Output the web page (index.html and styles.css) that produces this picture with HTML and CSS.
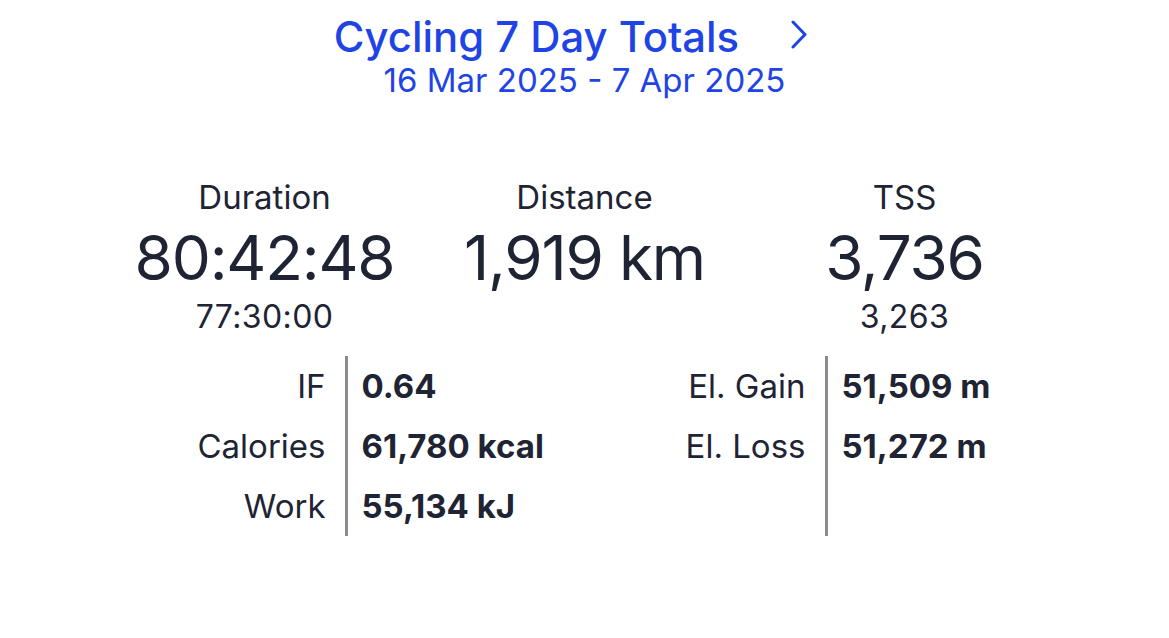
FILE: index.html
```html
<!DOCTYPE html>
<html lang="en">
<head>
    <meta charset="UTF-8">
    <title>Cycling 7 Day Totals</title>
    <link rel="stylesheet" href="styles.css">
</head>
<body>

<div class="page">
    <header class="summary-head">
        <a class="title-link" href="#">
            <span class="title">Cycling 7 Day Totals</span>
            <span class="chevron">
                <svg width="16" height="29" viewBox="0 0 16 29">
                    <path d="M2 2 L14 14.5 L2 27" fill="none" stroke="currentColor" stroke-width="3" stroke-linecap="round" stroke-linejoin="round"/>
                </svg>
            </span>
        </a>
        <div class="range">16 Mar 2025 - 7 Apr 2025</div>
    </header>

    <section class="totals">
        <div class="total">
            <div class="total-label">Duration</div>
            <div class="total-value">80:42:48</div>
            <div class="total-planned">77:30:00</div>
        </div>
        <div class="total">
            <div class="total-label">Distance</div>
            <div class="total-value">1,919 km</div>
            <div class="total-planned"></div>
        </div>
        <div class="total">
            <div class="total-label">TSS</div>
            <div class="total-value">3,736</div>
            <div class="total-planned">3,263</div>
        </div>
    </section>

    <section class="details">
        <div class="detail-table">
            <div class="detail-label">IF</div>
            <div class="detail-value">0.64</div>
            <div class="detail-label">Calories</div>
            <div class="detail-value">61,780 kcal</div>
            <div class="detail-label">Work</div>
            <div class="detail-value">55,134 kJ</div>
        </div>
        <div class="detail-table">
            <div class="detail-label">El. Gain</div>
            <div class="detail-value">51,509 m</div>
            <div class="detail-label">El. Loss</div>
            <div class="detail-value">51,272 m</div>
            <div class="detail-label"></div>
            <div class="detail-value"></div>
        </div>
    </section>
</div>

</body>
</html>
```

FILE: styles.css
```css
body {
    margin: 0;
    background: #fff;
    color: #1e2433;
    font-family: Inter, "Noto Sans", sans-serif;
}
.page {
    width: 960px;
    margin: 0 auto;
    padding-top: 14px;
}
.summary-head {
    display: flex;
    flex-direction: column;
    align-items: center;
    color: #1f44e6;
}
.title-link {
    display: flex;
    align-items: center;
    color: inherit;
    text-decoration: none;
}
.title {
    font-size: 41.8px;
    font-weight: 500;
    line-height: 46px;
}
.chevron {
    display: flex;
    width: 44px;
    margin-left: 52px;
    margin-top: -5px;
}
.range {
    font-size: 33px;
    line-height: 40px;
}
.totals {
    display: grid;
    grid-template-columns: repeat(3, 1fr);
    margin-top: 77px;
    text-align: center;
}
.total-label {
    font-size: 33px;
    line-height: 40px;
}
.total-value {
    font-size: 62px;
    line-height: 68px;
    letter-spacing: -1.2px;
    margin-top: 7px;
}
.total-planned {
    font-size: 32px;
    line-height: 40px;
    letter-spacing: 0.4px;
    margin-top: 5px;
    min-height: 40px;
}
.details {
    display: grid;
    grid-template-columns: 1fr 1fr;
    margin-top: 19px;
}
.detail-table {
    display: grid;
    grid-template-columns: 240px 240px;
    grid-auto-rows: 60px;
    font-size: 33px;
    line-height: 60px;
}
.detail-label {
    text-align: right;
    padding-right: 19px;
}
.detail-value {
    font-weight: 700;
    padding-left: 14px;
    border-left: 3px solid #8c8c8c;
}
```
